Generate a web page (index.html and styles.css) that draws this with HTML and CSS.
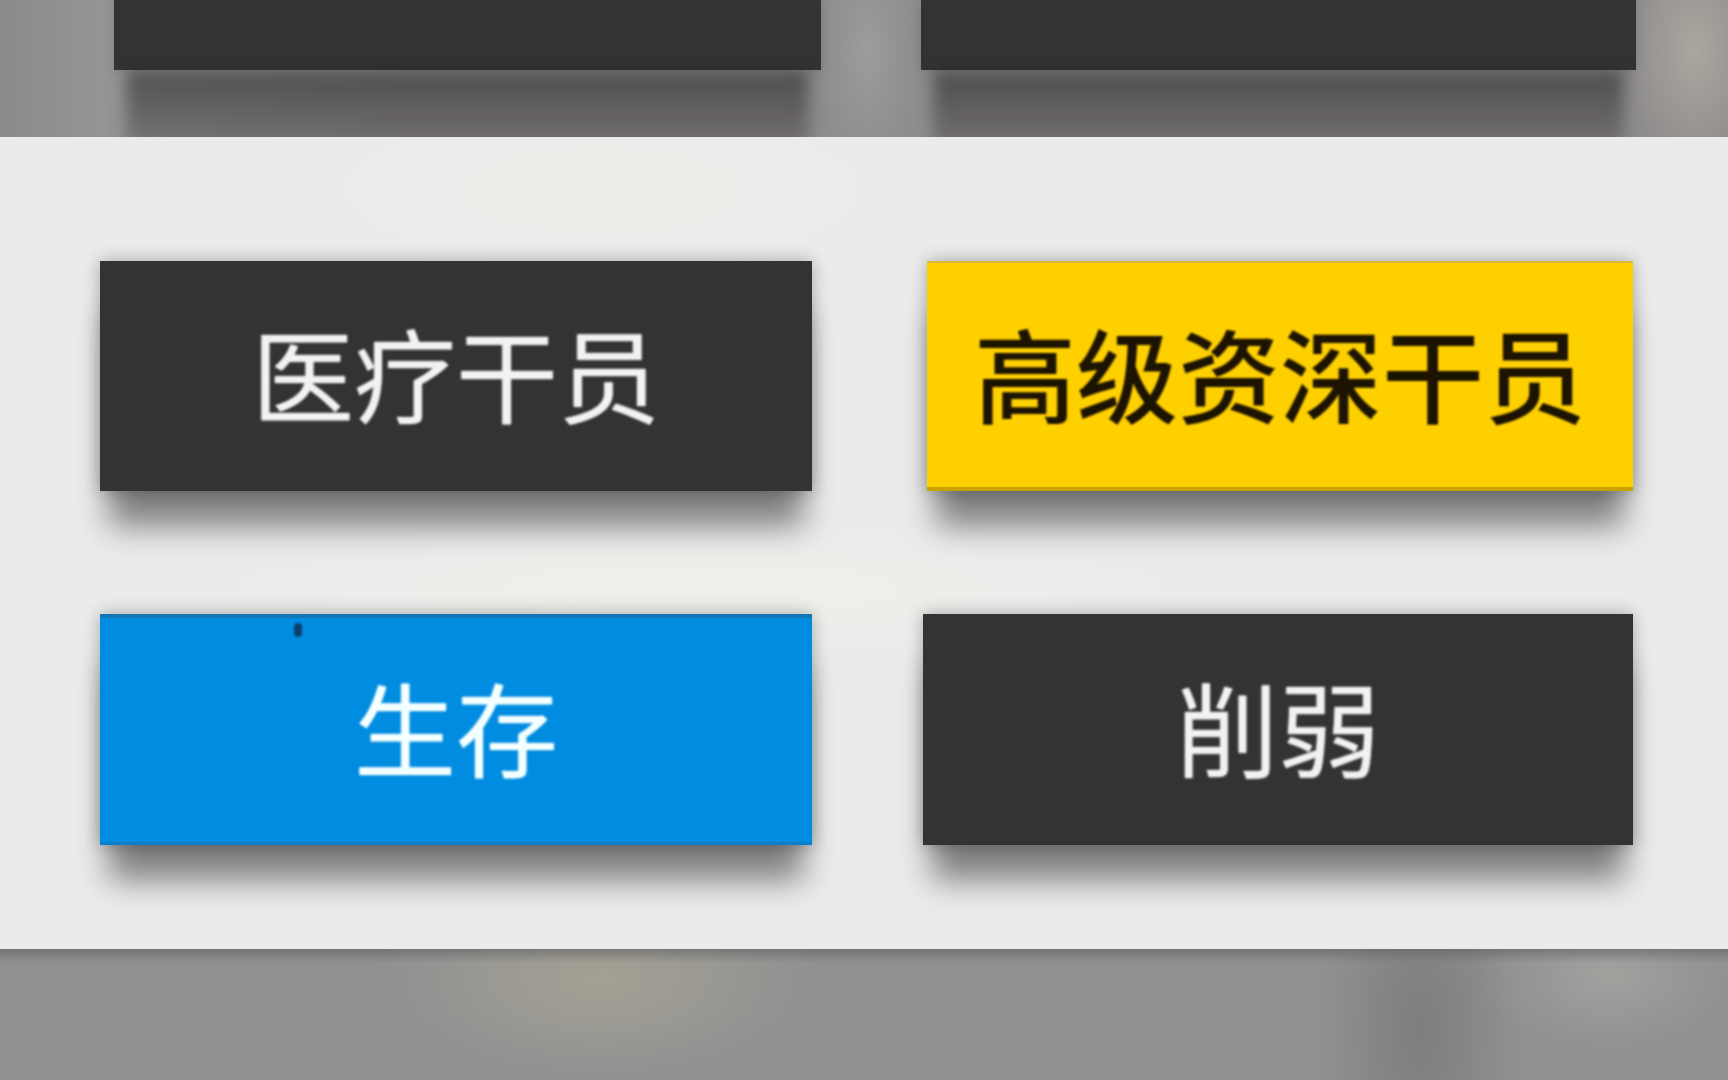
FILE: index.html
```html
<!DOCTYPE html>
<html lang="zh-CN">
<head>
    <meta charset="UTF-8">
    <meta name="viewport" content="width=device-width, initial-scale=1.0">
    <title>公开招募</title>
    <link rel="stylesheet" href="styles.css">
</head>
<body>
    <div class="top-strip">
        <div class="tag tag-cut tag-cut-left"></div>
        <div class="tag tag-cut tag-cut-right"></div>
    </div>

    <div class="panel">
        <div class="tag"><span class="label">医疗干员</span></div>
        <div class="tag tag-yellow"><span class="label">高级资深干员</span></div>
        <div class="tag tag-blue"><span class="speck"></span><span class="label">生存</span></div>
        <div class="tag tag-shift"><span class="label">削弱</span></div>
    </div>

    <div class="bottom-strip"></div>
</body>
</html>
```

FILE: styles.css
```css
html, body {
    margin: 0;
    padding: 0;
}
body {
    width: 1728px;
    height: 1080px;
    overflow: hidden;
    display: flex;
    flex-direction: column;
    font-family: "Noto Sans CJK SC", "Noto Sans", sans-serif;
    background-color: #8f8e90;
}
.top-strip {
    height: 137px;
    flex: none;
    display: flex;
    align-items: flex-start;
    gap: 100px;
    padding-left: 114px;
    overflow: hidden;
    background:
        radial-gradient(ellipse 50px 120px at 868px 50px, #9c9c9c, transparent),
        radial-gradient(ellipse 70px 120px at 1695px 50px, #aaa79f, transparent),
        linear-gradient(90deg, #8a8a8a, #959595 100px, #8e8c8c 400px);
}
.panel {
    flex: none;
    height: 812px;
    box-sizing: border-box;
    padding: 124px 94px 0 100px;
    display: grid;
    grid-template-columns: 712px 712px;
    grid-template-rows: 230px 231px;
    column-gap: 110px;
    row-gap: 123px;
    background:
        radial-gradient(ellipse 500px 70px at 700px 453px, #efefea, transparent),
        radial-gradient(ellipse 300px 90px at 600px 53px, #edede9, transparent),
        #ebebeb;
    box-shadow: 0 1px 1px rgba(90, 90, 90, 0.5);
}
.bottom-strip {
    flex: 1;
    background:
        linear-gradient(rgba(100, 98, 98, 0.6), rgba(100, 98, 98, 0) 14px),
        radial-gradient(ellipse 230px 110px at 600px 30px, #a3a193, transparent),
        radial-gradient(ellipse 130px 80px at 1610px 26px, #a1a19e, transparent),
        radial-gradient(ellipse 100px 220px at 1420px 80px, #7e7e7d, transparent),
        #908f92;
}
.tag {
    position: relative;
    display: flex;
    align-items: center;
    justify-content: center;
    padding-bottom: 8px;
    box-sizing: border-box;
    background-color: #333333;
    color: #f2f2f2;
    font-size: 102px;
    line-height: 1;
    box-shadow: 0 44px 30px -9px rgba(0, 0, 0, 0.46), 0 0 16px rgba(0, 0, 0, 0.3);
}
.label {
    filter: blur(0.8px);
    text-shadow: 0 0 1.5px currentColor;
}
.tag-cut {
    height: 70px;
    padding-bottom: 0;
}
.tag-cut::after {
    content: "";
    position: absolute;
    top: 100%;
    left: 12px;
    right: 12px;
    height: 80px;
    background: linear-gradient(rgba(40, 36, 36, 0.62), rgba(60, 56, 56, 0.3));
    filter: blur(8px);
}
.tag-cut-left {
    width: 707px;
}
.tag-cut-right {
    width: 715px;
}
.top-strip .tag {
    box-shadow: 0 0 10px rgba(0, 0, 0, 0.15);
}
.tag-shift {
    margin-left: 1px;
    margin-right: 1px;
}
.tag-yellow {
    margin-left: 5px;
    margin-right: 1px;
    padding-bottom: 6px;
    background-color: #ffd000;
    color: #1c1300;
    font-weight: 500;
    border-top: 2px solid #d9b73a;
    border-bottom: 4px solid #c9a208;
}
.tag-yellow .label {
    text-shadow: none;
}
.tag-blue {
    background-color: #008ce0;
    color: #f4ffff;
    border-top: 4px solid #1476b5;
    border-bottom: 3px solid #0a80c8;
}
.speck {
    position: absolute;
    left: 194px;
    top: 5px;
    width: 8px;
    height: 14px;
    border-radius: 4px;
    background-color: #0b3f6e;
    filter: blur(1px);
}
```
